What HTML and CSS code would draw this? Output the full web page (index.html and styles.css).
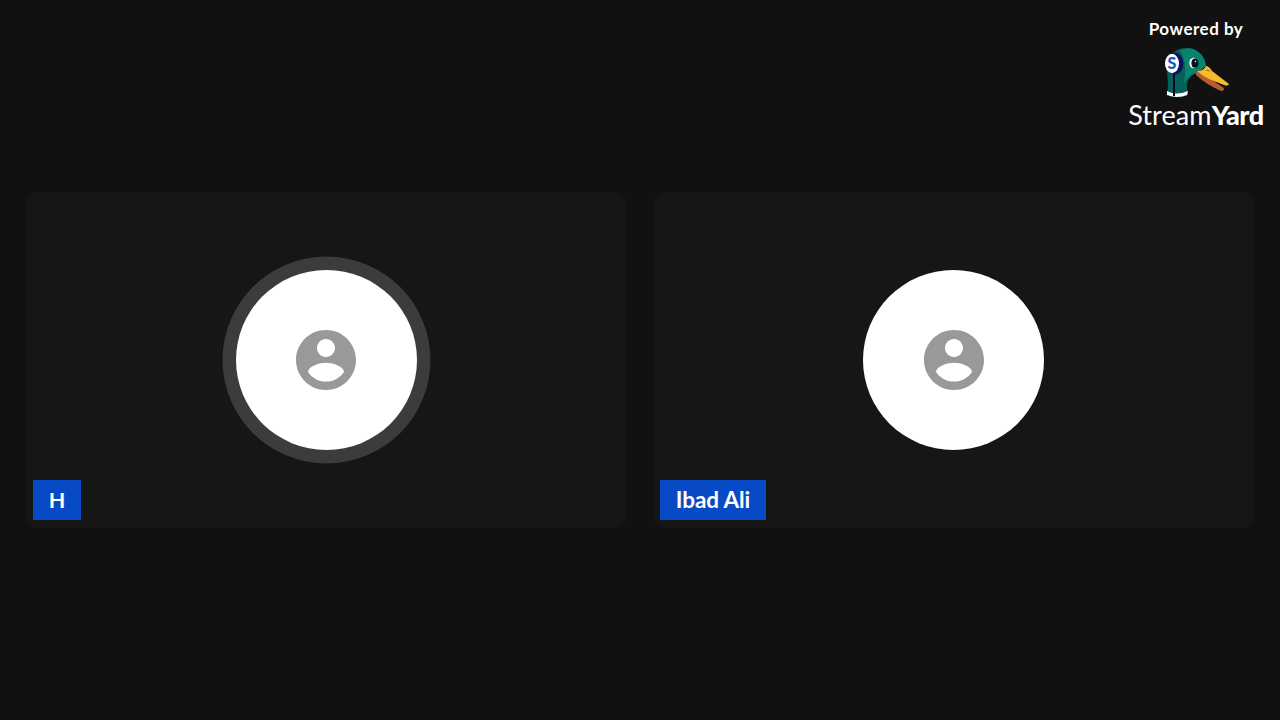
FILE: index.html
```html
<!DOCTYPE html>
<html lang="en">
<head>
  <meta charset="UTF-8">
  <meta name="viewport" content="width=device-width, initial-scale=1.0">
  <title>StreamYard</title>
  <link rel="stylesheet" href="styles.css">
</head>
<body>

  <div class="brand">
    <span class="powered">Powered by</span>
    <svg class="duck" viewBox="0 0 80 60" width="80" height="60">
      <!-- head and neck -->
      <path d="M12 51 C14 43 12 36 12 24 C13 12 22 5 33 6 C42 7 49 13 51 24 L42 31 C35 33 32 38 32 44 L33 53 C25 57 17 55 12 51Z" fill="#075f59"/>
      <path d="M25 9 C37 2 50 11 51 24 L42 31 C36 32 33 37 29 41 C31 29 31 18 25 9Z" fill="#08836b"/>
      <path d="M12 49 Q21 54 33 49 L32 53 Q22 57 12 53Z" fill="#fff"/>
      <!-- beak -->
      <path d="M41 30 L44 29 L69 46 Q69 50 65 48.500 Q52 43 41 33Z" fill="#b45d35"/>
      <path d="M42 29 Q49 29 51 24 Q54 24 57 29 L74 42 Q73 44.500 69 43 L54 37 Q48 34 42 29Z" fill="#f5bc2d"/>
      <path d="M51 28 L55 29" stroke="#a66b16" stroke-width="1.2"/>
      <!-- eye -->
      <ellipse cx="38.5" cy="21" rx="4.2" ry="5.3" fill="#fff"/>
      <ellipse cx="39.9" cy="21.2" rx="3.5" ry="4.6" fill="#07131f"/>
      <circle cx="40.5" cy="19.5" r="0.8" fill="#fff"/>
      <!-- headphone -->
      <path d="M19 29 V54" stroke="#090b26" stroke-width="2"/>
      <ellipse cx="20" cy="21.5" rx="8.5" ry="11" fill="#09145a"/>
      <ellipse cx="17" cy="21.5" rx="7" ry="9.7" fill="#fff"/>
      <text class="duck-letter" x="17" y="27" text-anchor="middle">S</text>
    </svg>
    <div class="wordmark"><span class="stream">Stream</span><span class="yard">Yard</span></div>
  </div>

  <main class="stage">
    <section class="tile">
      <div class="avatar speaking">
        <svg class="person" viewBox="0 0 24 24" width="72" height="72">
          <path d="M12 2C6.480 2 2 6.480 2 12s4.480 10 10 10 10-4.480 10-10S17.520 2 12 2zm0 3c1.660 0 3 1.340 3 3s-1.340 3-3 3-3-1.340-3-3 1.340-3 3-3zm0 14.200c-2.500 0-4.710-1.280-6-3.220.030-1.990 4-3.080 6-3.080 1.990 0 5.970 1.090 6 3.080-1.290 1.940-3.500 3.220-6 3.220z"/>
        </svg>
      </div>
      <span class="name name-h">H</span>
    </section>

    <section class="tile">
      <div class="avatar guest">
        <svg class="person" viewBox="0 0 24 24" width="72" height="72">
          <path d="M12 2C6.480 2 2 6.480 2 12s4.480 10 10 10 10-4.480 10-10S17.520 2 12 2zm0 3c1.660 0 3 1.340 3 3s-1.340 3-3 3-3-1.340-3-3 1.340-3 3-3zm0 14.200c-2.500 0-4.710-1.280-6-3.220.030-1.990 4-3.080 6-3.080 1.990 0 5.970 1.090 6 3.080-1.290 1.940-3.500 3.220-6 3.220z"/>
        </svg>
      </div>
      <span class="name name-guest">Ibad Ali</span>
    </section>
  </main>

</body>
</html>
```
FILE: styles.css
```css
* {
  box-sizing: border-box;
}

body {
  margin: 0;
  height: 100vh;
  overflow: hidden;
  background-color: #111;
  color: #fff;
  font-family: Lato, sans-serif;
}

.stage {
  display: flex;
  justify-content: center;
  align-items: center;
  gap: 28px;
  height: 100%;
}

.tile {
  position: relative;
  display: flex;
  justify-content: center;
  align-items: center;
  width: 600px;
  height: 336px;
  border-radius: 10px;
  background-color: #161616;
}

.avatar {
  display: flex;
  justify-content: center;
  align-items: center;
  width: 181px;
  height: 180px;
  border-radius: 50%;
  background-color: #fff;
}

.guest {
  margin-right: 1px;
  padding-left: 1px;
}

/* ring around whoever is talking */
.speaking {
  box-shadow: 0 0 0 13.5px #3c3c3c;
}

.person {
  flex-shrink: 0;
  fill: #999;
}

.name {
  position: absolute;
  left: 6px;
  bottom: 8px;
  height: 40px;
  background-color: #0849c6;
  font-size: 22.5px;
  font-weight: 700;
  line-height: 40px;
  text-align: center;
  white-space: nowrap;
}

.name-h {
  left: 7px;
  width: 48px;
  font-size: 21.5px;
}

.name-guest {
  width: 106px;
  letter-spacing: -0.1px;
}

/* logo sits over the top right corner of the stage */
.brand {
  position: absolute;
  top: 18px;
  right: 13px;
  display: flex;
  flex-direction: column;
  align-items: center;
  width: 142px;
}

.powered {
  height: 24px;
  font-size: 17px;
  font-weight: 700;
  line-height: 21px;
  letter-spacing: 0.5px;
  white-space: nowrap;
}

.duck {
  display: block;
  margin-right: 2px;
}

.duck-letter {
  font-family: Lato, sans-serif;
  font-size: 16px;
  font-weight: 900;
  fill: #1557c5;
}

.wordmark {
  height: 28px;
  font-size: 27px;
  line-height: 26px;
  white-space: nowrap;
}

.stream {
  letter-spacing: 0.1px;
}

.yard {
  font-weight: 900;
  letter-spacing: -0.4px;
}
```
